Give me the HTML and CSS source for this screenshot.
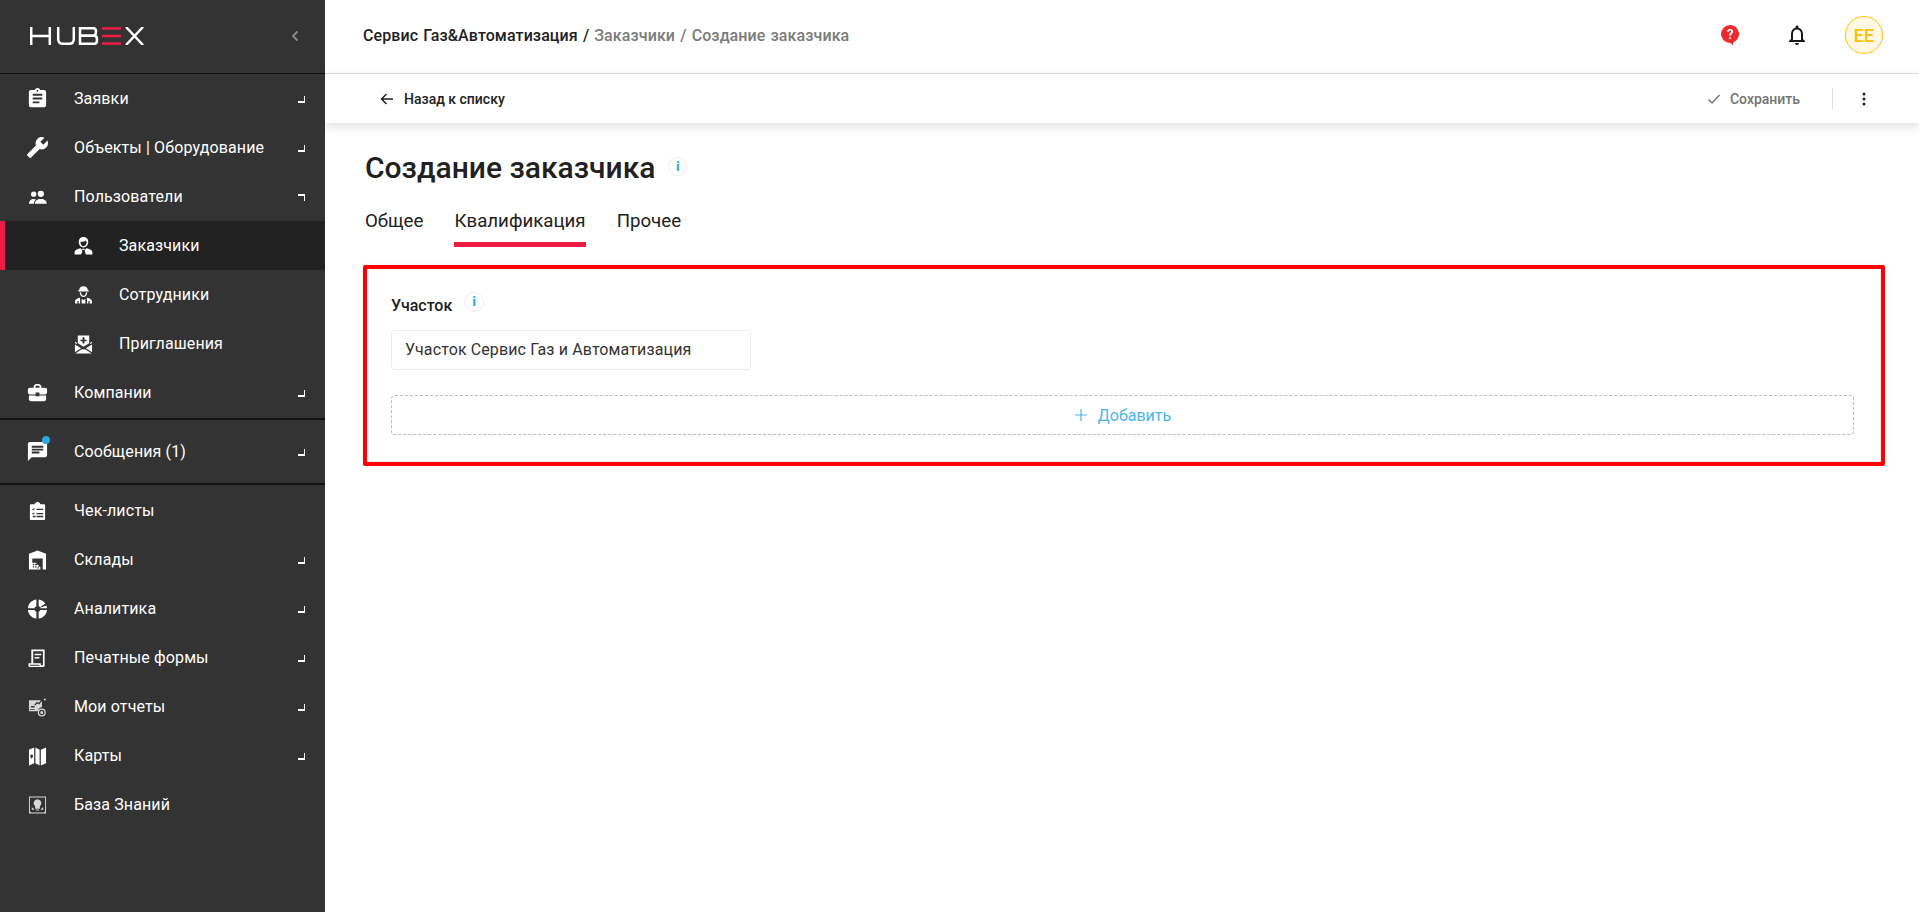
FILE: index.html
```html
<!DOCTYPE html>
<html lang="ru">
<head>
<meta charset="utf-8">
<title>Создание заказчика</title>
<link rel="stylesheet" href="styles.css">
</head>
<body>
<div class="app">
  <aside class="sidebar">
    <div class="brand">
      <svg class="logo" width="114" height="18" viewBox="0 0 114 18" fill="none" stroke-width="2.500">
        <g stroke="#fff">
          <path d="M1.200 0v18M19.800 0v18M1.200 9h18.600"/>
          <path d="M28.200 0v12q0 4.800 4.800 4.800h6q4.800 0 4.800-4.800V0"/>
          <path d="M50 1.200h13.500q2.500 0 2.500 3.500t-2.500 3.700H50zM50 8.800h14.500q2.500 0 2.500 4t-2.500 4H50z"/>
        </g>
        <path d="M72 1.500h19M72 9h19M72 16.500h19" stroke="#ee1c44"/>
        <path d="M96 0l17 18M113 0L96 18" stroke="#fff"/>
      </svg>
      <svg class="collapse" width="8" height="12" viewBox="0 0 8 12" fill="none"><path d="M6.500 1.500L2 6l4.500 4.500" stroke="#8c8c8c" stroke-width="1.800"/></svg>
    </div>
    <nav class="menu">
      <a class="item"><svg class="ico m" viewBox="0 0 24 24"><path d="M19 3h-4.180C14.400 1.840 13.300 1 12 1c-1.300 0-2.400.84-2.820 2H5c-1.100 0-2 .9-2 2v14c0 1.100.9 2 2 2h14c1.100 0 2-.9 2-2V5c0-1.100-.9-2-2-2zm-7 0c.55 0 1 .45 1 1s-.45 1-1 1-1-.45-1-1 .45-1 1-1zm2 14H7v-2h7v2zm3-4H7v-2h10v2zm0-4H7V7h10v2z"/></svg><span class="label">Заявки</span><i class="corner"></i></a>
      <a class="item"><svg class="ico m" viewBox="0 0 24 24"><g transform="matrix(-1 0 0 1 24 0)"><path d="M22.700 19l-9.100-9.100c.9-2.300.4-5-1.500-6.900-2-2-5-2.400-7.400-1.300L9 6 6 9 1.600 4.700C.4 7.100.9 10.100 2.900 12.100c1.900 1.900 4.600 2.400 6.900 1.500l9.100 9.100c.4.4 1 .4 1.400 0l2.300-2.300c.5-.4.5-1.100.1-1.400z"/></g></svg><span class="label">Объекты | Оборудование</span><i class="corner"></i></a>
      <a class="item"><svg class="ico" viewBox="0 0 20 20"><circle cx="6" cy="7" r="2.800"/><circle cx="13.500" cy="6.600" r="3.300"/><path d="M1 17c0-2.800 1.700-5 5-5 1 0 1.800.2 2.400.6-1.300 1-2.100 2.500-2.100 4.400zM7.300 17.200c0-3 2.400-5 6.200-5s6.200 2 6.200 5z"/></svg><span class="label">Пользователи</span><i class="corner open"></i></a>
      <a class="item sub active"><svg class="ico" viewBox="0 0 20 20"><path fill-rule="evenodd" d="M10 .6C7 .6 5 2.600 5 5.600c0 3.300 2.200 6 5 6s5-2.700 5-6c0-3-2-5-5-5zM6.800 5.500C8.500 5.800 11 5.600 12.300 4.200c.4.700.9 1 1 1.400 0 2.800-1.500 4.600-3.300 4.600S6.700 8.400 6.800 5.500zM6.600 12.300C3 13 .6 14.400.6 16.800V19h6.900l1.300-3.800L7.700 13zM13.400 12.300C17 13 19.400 14.400 19.400 16.800V19h-6.900l-1.300-3.800 1.100-2.200zM9 13h2l.4 1.200h-2.800z"/></svg><span class="label">Заказчики</span></a>
      <a class="item sub"><svg class="ico" viewBox="0 0 20 20"><path fill-rule="evenodd" d="M10 .8C7.500.8 5.600 2.500 5.400 5H4.500v1.400h11V5h-.9C14.400 2.500 12.500.8 10 .8zM6 7.200c.2 2.900 1.800 5 4 5s3.800-2.100 4-5h-1.300c-.2 2-1.200 3.600-2.700 3.600S7.500 9.200 7.300 7.200zM6.300 13C3 13.700 1 15 1 16.800V19h2.600v-2.800h1.300V19h1.500v-5.600zM13.700 13c3.300.7 5.300 2 5.300 3.800V19h-2.600v-2.800h-1.300V19h-1.500v-5.600zM8 14.200l2 1 2-1V19H8z"/></svg><span class="label">Сотрудники</span></a>
      <a class="item sub"><svg class="ico" viewBox="0 0 20 20"><path d="M4 1h12v8.200L10 13 4 9.200zm5 2v2.500H6.800v1.700H9v2.300h2V7.200h2.200V5.500H11V3zM1 7.500l2 1.300v1.500L1 9zm18 0V9l-2 1.300V8.800zM1 10.500l6.500 4L1 18.600zm18 0v8.100l-6.500-4.100zM8.700 15.300 10 16l1.300-.7 7.300 4.700H1.400z"/></svg><span class="label">Приглашения</span></a>
      <a class="item"><svg class="ico m" viewBox="0 0 24 24"><path d="M10 16v-1H3.010L3 19c0 1.110.89 2 2 2h14c1.110 0 2-.89 2-2v-4h-7v1h-4zm10-9h-4.010V5l-2-2h-4l-2 2v2H4c-1.100 0-2 .9-2 2v3c0 1.110.89 2 2 2h6v-2h4v2h6c1.100 0 2-.9 2-2V9c0-1.100-.9-2-2-2zm-6 0h-4V5h4v2z"/></svg><span class="label">Компании</span><i class="corner"></i></a>
      <div class="rule first"></div>
      <a class="item tall"><span class="ico-wrap"><svg class="ico m" viewBox="0 0 24 24"><path d="M20 2H4c-1.100 0-2 .9-2 2v18l4-4h14c1.100 0 2-.9 2-2V4c0-1.100-.9-2-2-2zm-6 12H6v-2h8v2zm4-3H6V9h12v2zm0-3H6V6h12v2z"/></svg><b class="dot"></b></span><span class="label">Сообщения (1)</span><i class="corner"></i></a>
      <div class="rule last"></div>
      <a class="item"><svg class="ico" viewBox="0 0 20 20"><path d="M3 3h4c0-1.500 1.300-2.500 3-2.500s3 1 3 2.500h4c.6 0 1 .4 1 1v14.500c0 .6-.4 1-1 1H3c-.6 0-1-.4-1-1V4c0-.6.4-1 1-1zm3.500 4L5.600 8 5 7.400l-.7.7 1.300 1.300 1.600-1.700zM9 7.500V9h7V7.500zm-2.500 4-.9 1-.6-.6-.7.7 1.300 1.300 1.600-1.700zM9 12v1.500h7V12zm-4 3v1.500h3V15zm4 0v1.500h7V15z"/></svg><span class="label">Чек-листы</span></a>
      <a class="item"><svg class="ico" viewBox="0 0 20 20"><path d="M10 0 1 3.500V20h18V3.500zM4.500 8.500h11V20H13v-3h-2v-2H9v-2H4.500zM5 14h1.500v1.500H5zm2.500 0H9v1.500H7.500zM5 16.500h1.500V18H5zm2.500 0H9V18H7.500zm2.500 1h1.500V19H10z"/></svg><span class="label">Склады</span><i class="corner"></i></a>
      <a class="item"><svg class="ico" viewBox="0 0 20 20"><path d="M8.800 0v7.200c-1 .4-1.600 1.100-1.900 2H0C.3 4.400 4 .4 8.800 0zM11.200 0c2.800.2 5.400 1.800 7 4.200l-5.500 3.900c-.4-.4-.9-.7-1.500-.9zM19.300 6.300c.5 1 .7 2 .7 2.900h-7.100c0-.2-.1-.4-.2-.6zM0 11h6.900c.3.9 1 1.600 1.900 2v7C4 19.600.3 15.700 0 11zM13 11h7c-.4 4.700-4 8.600-8.800 9v-7c.8-.4 1.500-1.100 1.800-2z"/></svg><span class="label">Аналитика</span><i class="corner"></i></a>
      <a class="item"><svg class="ico" viewBox="0 0 20 20"><path d="M3.500 1h14v17c0 .8-.5 1.500-1.300 1.500H1.500C.7 19.500.5 19 .5 18v-2.500h3zm2 2v12.500h8v2h2.200V3zm1.500 2.500h7V7H7zm0 3.500h5v1.500H7zM2 17v1.200h10V17z"/></svg><span class="label">Печатные формы</span><i class="corner"></i></a>
      <a class="item"><svg class="ico faded" viewBox="0 0 20 20"><path d="M1 3h12.500l-2 2.500-2-1-3 3 1 1 2.200-2.200 2 1 3-3.700V10a5.500 5.500 0 0 0-4.500 4.500H1zm2 6v1.500h4V9zm-1 3v1h5v-1zM17.500 .8l1.500 1-1 1.500-1.500-1zM14.500 11.500a4.200 4.200 0 1 1 0 8.400 4.200 4.200 0 0 1 0-8.400zm0 1.300a2.900 2.900 0 1 0 0 5.800 2.900 2.900 0 0 0 0-5.800zm0 1.300a1.600 1.600 0 1 1 0 3.200 1.600 1.600 0 0 1 0-3.200z"/></svg><span class="label">Мои отчеты</span><i class="corner"></i></a>
      <a class="item"><svg class="ico" viewBox="0 0 20 20"><path d="M1 3.500 6.500 1v16.500L1 20zm2.800 5a1.500 1.500 0 0 0-1.500 1.500c0 1.200 1.500 3 1.500 3s1.500-1.800 1.500-3a1.500 1.500 0 0 0-1.500-1.500zM7.800 1l4.400 2.500V20l-4.400-2.500zM13.500 3.500 19 1v16.500L13.500 20z"/></svg><span class="label">Карты</span><i class="corner"></i></a>
      <a class="item"><svg class="ico faded" viewBox="0 0 20 20"><path fill-rule="evenodd" d="M1 1h18v18H1zm1 1v15h16V2zm1 16h14v-1H3zM10 4a4.200 4.200 0 0 1 2.500 7.500V14h-5v-2.500A4.200 4.200 0 0 1 10 4zm-1.500 10.800h3v1h-3zM4 12l3 3H4zm12 0v3h-3z"/></svg><span class="label">База Знаний</span></a>
    </nav>
  </aside>
  <div class="main">
    <header class="topbar">
      <div class="crumbs"><span class="crumb-strong">Сервис Газ&amp;Автоматизация /</span> <span class="crumb-muted">Заказчики</span> <span class="crumb-muted">/</span> <span class="crumb-muted">Создание заказчика</span></div>
      <div class="top-actions">
        <svg class="help" width="20" height="22" viewBox="0 0 20 22"><path d="M10 1a9 9 0 0 0 0 18l.5 0 2.500 2.500v-3A9 9 0 0 0 10 1z" fill="#f02b30"/><path d="M7 7.800c0-1.800 1.300-2.800 3.100-2.800s3 1 3 2.500c0 2.300-2.200 2.200-2.200 4.300H9c0-2.900 2.200-2.900 2.200-4.200 0-.6-.5-1-1.100-1-.7 0-1.200.5-1.200 1.200zM9 13.200h1.900v1.900H9z" fill="#fff"/></svg>
        <svg class="bell" width="24" height="24" viewBox="0 0 24 24"><path d="M12 22c1.100 0 2-.9 2-2h-4c0 1.100.9 2 2 2zm6-6v-5c0-3.070-1.630-5.640-4.500-6.320V4c0-.83-.67-1.500-1.500-1.500s-1.500.67-1.500 1.500v.68C7.640 5.360 6 7.920 6 11v5l-2 2v1h16v-1l-2-2zm-2 1H8v-6c0-2.480 1.510-4.500 4-4.500s4 2.020 4 4.500v6z" fill="#1a1a1a"/></svg>
        <div class="avatar">EE</div>
      </div>
    </header>
    <div class="toolbar">
      <a class="back"><svg width="16" height="16" viewBox="0 0 16 16" fill="none"><path d="M14 8H3M7.500 3 2.500 8l5 5" stroke="#222" stroke-width="1.500"/></svg><span>Назад к списку</span></a>
      <div class="tools">
        <a class="save"><svg width="16" height="16" viewBox="0 0 16 16" fill="none"><path d="M2.500 8.500 6 12l7.500-8" stroke="#757575" stroke-width="1.500"/></svg><span>Сохранить</span></a>
        <span class="tool-sep"></span>
        <svg class="kebab" width="4" height="14" viewBox="0 0 4 14"><circle cx="2" cy="2" r="1.500"/><circle cx="2" cy="7" r="1.500"/><circle cx="2" cy="12" r="1.500"/></svg>
      </div>
    </div>
    <main class="content">
      <div class="title-row">
        <h1 class="title">Создание заказчика</h1>
        <span class="info small">i</span>
      </div>
      <div class="tabs">
        <a class="tab">Общее</a>
        <a class="tab current">Квалификация</a>
        <a class="tab">Прочее</a>
      </div>
      <section class="card">
        <div class="field-label"><span>Участок</span><span class="info">i</span></div>
        <div class="input">Участок Сервис Газ и Автоматизация</div>
        <button class="add"><svg width="14" height="14" viewBox="0 0 14 14" fill="none"><path d="M7 1v12M1 7h12" stroke="#4db4ec" stroke-width="1.200"/></svg><span>Добавить</span></button>
      </section>
    </main>
  </div>
</div>
</body>
</html>
```
FILE: styles.css
```css
* { box-sizing: border-box; }
html, body { margin: 0; height: 100%; overflow: hidden; }
body { font-family: Roboto, "Liberation Sans", sans-serif; color: #212121; background: #fff; }
.app { display: flex; height: 912px; }

.sidebar { width: 325px; flex: none; background: #333; color: #fff; display: flex; flex-direction: column; position: relative; z-index: 2; }
.brand { height: 74px; flex: none; border-bottom: 1px solid #111; display: flex; align-items: center; justify-content: space-between; padding: 0 26px 2px 30px; }
.logo { display: block; }
.collapse { display: block; }
.menu { display: flex; flex-direction: column; }
.item { height: 49px; flex: none; display: flex; align-items: center; padding: 0 20px 0 28px; font-size: 16px; font-weight: 400; letter-spacing: .12px; color: #fff; position: relative; }
.item.tall { height: 63px; }
.item.sub { padding-left: 74px; }
.item.active { background: #222; box-shadow: inset 5px 0 0 #ee1c44; }
.ico { width: 19px; height: 20px; fill: #fff; flex: none; display: block; }
.ico.m { width: 23px; height: 23px; margin: 0 -2px; }
.ico.faded { fill: #d8d8d8; }
.ico-wrap { position: relative; width: 19px; height: 23px; flex: none; }
.dot { position: absolute; left: 14px; top: -4px; width: 8px; height: 8px; border-radius: 50%; background: #29abe2; }
.label { margin-left: 27px; }
.item.sub .label { margin-left: 26px; }
.corner { position: absolute; right: 20px; top: calc(50% - 3px); width: 7px; height: 7px; border-right: 1px solid #fff; border-bottom: 2px solid #fff; }
.corner.open { border-bottom: 0; border-top: 2px solid #fff; }
.rule { height: 2px; background: #111; flex: none; }
.rule.first { margin-top: 1px; }
.rule.last { margin-bottom: 1px; }

.main { flex: 1; min-width: 0; display: flex; flex-direction: column; }
.topbar { height: 74px; flex: none; border-bottom: 1px solid #e2e2e2; display: flex; align-items: center; justify-content: space-between; padding: 0 36px 3px 38px; }
.crumbs { font-size: 16px; font-weight: 500; word-spacing: 1px; letter-spacing: .1px; }
.crumb-strong { color: #212121; }
.crumb-muted { color: #7b7b7b; }
.top-actions { display: flex; align-items: center; }
.help { display: block; margin-right: 45px; }
.bell { display: block; margin-right: 36px; }
.avatar { width: 38px; height: 38px; border-radius: 50%; border: 1px solid #ffc107; background: #fff8e3; color: #ffbf00; font-size: 18px; font-weight: 500; display: flex; align-items: center; justify-content: center; }

.toolbar { height: 49px; flex: none; display: flex; align-items: center; justify-content: space-between; padding: 0 53px 0 54px; box-shadow: 0 3px 10px rgba(0,0,0,.14); position: relative; }
.back { display: flex; align-items: center; gap: 9px; font-size: 14px; font-weight: 500; color: #212121; }
.tools { display: flex; align-items: center; }
.save { display: flex; align-items: center; gap: 8px; font-size: 14px; font-weight: 500; color: #757575; }
.tool-sep { width: 1px; height: 22px; background: #e0e0e0; margin: 0 29px 0 32px; }
.kebab { display: block; fill: #212121; }

.content { flex: 1; padding: 0 34px 0 38px; }
.title-row { display: flex; align-items: center; height: 36px; margin: 27px 0 0 2px; }
.title { margin: 0; font-size: 30px; font-weight: 500; color: #212121; line-height: 36px; }
.info { width: 20px; height: 20px; border-radius: 50%; border: 1px solid #eee; color: #29abe2; font-size: 12px; font-weight: 900; display: inline-flex; align-items: center; justify-content: center; }
.info.small { width: 19px; height: 19px; margin-left: 13px; margin-top: -3px; }
.tabs { display: flex; gap: 31px; margin: 20px 0 0 2px; height: 41px; }
.tab { font-size: 18.700px; color: #212121; height: 41px; line-height: 24px; padding-top: 3px; }
.tab.current { border-bottom: 5px solid #ee1c44; }
.card { margin-top: 18px; height: 201px; border: 4px solid #f00; border-radius: 2px; padding: 24px 27px 0 24px; box-shadow: inset -1px -1px 0 #eee, 0 0 8px rgba(0,0,0,.04); }
.field-label { display: flex; align-items: center; font-size: 16px; font-weight: 500; color: #212121; height: 26px; margin-top: -1px; }
.field-label .info { margin-left: 12px; margin-top: -7px; }
.input { width: 360px; height: 40px; margin-top: 12px; border: 1px solid #ececec; border-radius: 4px; padding: 0 13px; font-size: 16px; line-height: 38px; color: #333; letter-spacing: .12px; white-space: nowrap; }
.add { display: flex; align-items: center; justify-content: center; gap: 10px; width: 100%; height: 40px; margin-top: 25px; background: #fff; border: 1px dashed #bdbdbd; border-radius: 4px; font: 400 16px Roboto, "Liberation Sans", sans-serif; color: #4db4ec; padding: 0; }
```
